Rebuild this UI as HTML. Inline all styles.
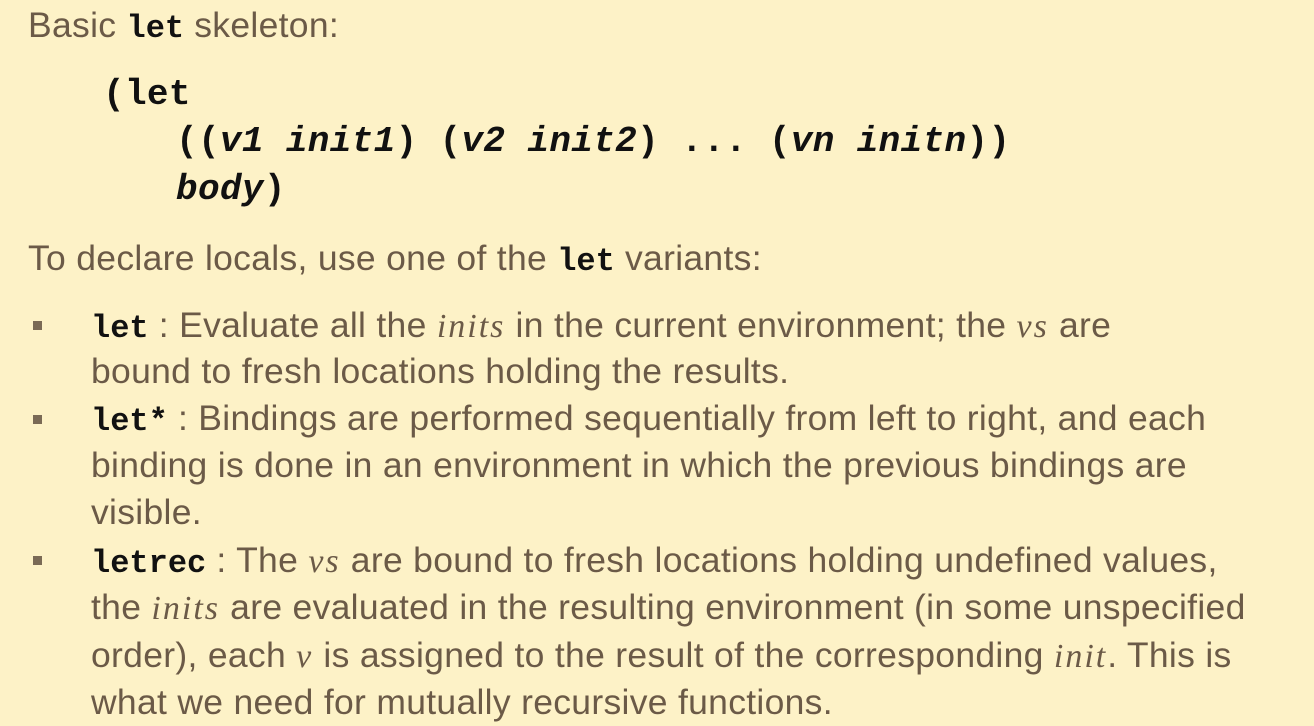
<!DOCTYPE html>
<html><head><style>
body{margin:0;width:1314px;height:722px;background:#fdf2c7;overflow:hidden;position:relative;font-family:"Liberation Sans",sans-serif;font-size:35.5px;color:#6b5a47;letter-spacing:0.3px}
.l{position:absolute;white-space:nowrap;line-height:47px}
.c{font-family:"Liberation Mono",monospace;color:#111;font-weight:bold;font-size:32px;letter-spacing:0}
.m{font-family:"Liberation Mono",monospace;color:#111;font-weight:bold;font-size:36px;letter-spacing:0.35px}
.m i{font-family:"Liberation Mono",monospace;font-style:italic;letter-spacing:0.35px;font-size:36px}
i{font-family:"Liberation Serif",serif;font-style:italic;letter-spacing:2px;font-size:34px}
.b{position:absolute;left:33px;width:9px;height:9px;background:#7a6a55}
</style></head><body>
<div class="l" style="left:28px;top:2px">Basic <span class="c">let</span> skeleton:</div>
<div class="l m" style="left:103px;top:71px">(let</div>
<div class="l m" style="left:176px;top:118px">((<i>v1</i> <i>init1</i>) (<i>v2</i> <i>init2</i>) ... (<i>vn</i> <i>initn</i>))</div>
<div class="l m" style="left:176px;top:166px"><i>body</i>)</div>
<div class="l" style="left:28px;top:235px">To declare locals, use one of the <span class="c">let</span> variants:</div>
<div class="b" style="top:321px"></div>
<div class="l" style="left:91px;top:302px"><span class="c">let</span> : Evaluate all the <i>inits</i> in the current environment; the <i>vs</i> are</div>
<div class="l" style="left:91px;top:348px">bound to fresh locations holding the results.</div>
<div class="b" style="top:415px"></div>
<div class="l" style="left:91px;top:395px"><span class="c">let*</span> : Bindings are performed sequentially from left to right, and each</div>
<div class="l" style="left:91px;top:442px">binding is done in an environment in which the previous bindings are</div>
<div class="l" style="left:91px;top:489px">visible.</div>
<div class="b" style="top:556px"></div>
<div class="l" style="left:91px;top:537px"><span class="c">letrec</span> : The <i>vs</i> are bound to fresh locations holding undefined values,</div>
<div class="l" style="left:91px;top:584px">the <i>inits</i> are evaluated in the resulting environment (in some unspecified</div>
<div class="l" style="left:91px;top:632px">order), each <i>v</i> is assigned to the result of the corresponding <i>init</i>. This is</div>
<div class="l" style="left:91px;top:679px">what we need for mutually recursive functions.</div>
</body></html>
